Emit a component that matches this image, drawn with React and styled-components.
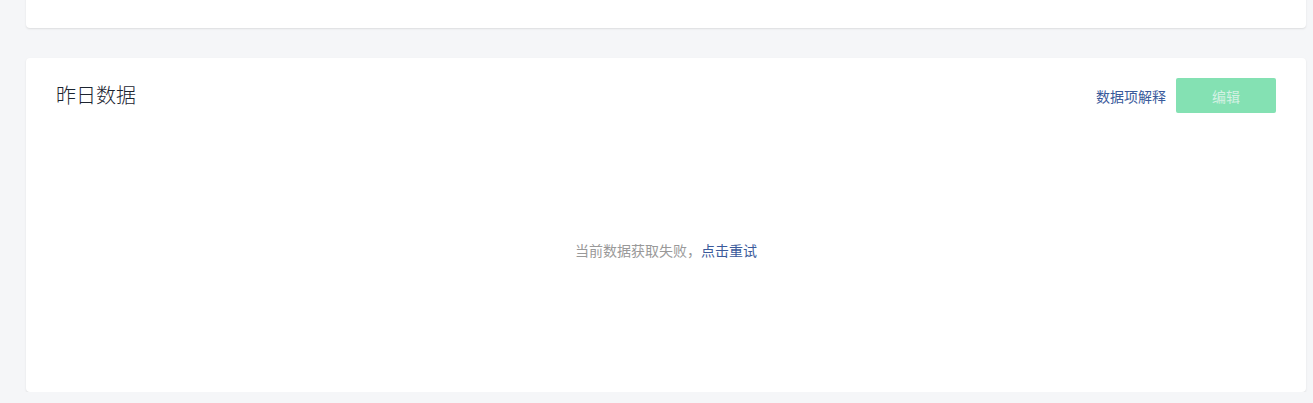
import React from "react";
import styled, { createGlobalStyle } from "styled-components";

const Global = createGlobalStyle`
  html, body { margin: 0; padding: 0; background: #f5f6f8; }
  body { font-family: "Noto Sans CJK SC", "Noto Sans", sans-serif; overflow: hidden; }
`;

const Page = styled.div`
  padding: 0 7px 0 26px;
  display: flex;
  flex-direction: column;
  gap: 30px;
`;

const Card = styled.div`
  background: #fff;
  border-radius: 4px;
  box-shadow: 0 1px 2px rgba(0, 0, 0, 0.1);
  height: ${(p) => p.$h}px;
  margin-top: ${(p) => p.$mt || 0}px;
  display: flex;
  flex-direction: column;
`;

const Header = styled.div`
  display: flex;
  align-items: center;
  justify-content: space-between;
  padding: 20px 30px;
`;

const Title = styled.h3`
  margin: 0 0 2px;
  font-size: 20px;
  font-weight: 300;
  color: #1c2430;
  line-height: 28px;
`;

const Actions = styled.div`
  display: flex;
  align-items: center;
  gap: 10px;
`;

const Link = styled.a`
  font-size: 14px;
  color: #3a5a9b;
  cursor: pointer;
  text-decoration: none;
`;

const Button = styled.button`
  width: 100px;
  height: 35px;
  border: none;
  border-radius: 2px;
  background: #84e1b3;
  color: #d4f1e4;
  font-family: inherit;
  font-size: 14px;
  cursor: not-allowed;
`;

const Body = styled.div`
  flex: 1;
  padding-top: 107px;
  text-align: center;
  font-size: 14px;
  line-height: 20px;
  color: #999;
`;

const Retry = styled.a`
  color: #3a5a9b;
  cursor: pointer;
`;

export default function App() {
  return (
    <>
      <Global />
      <Page>
        <Card $h={60} $mt={-32} />
        <Card $h={334}>
          <Header>
            <Title>昨日数据</Title>
            <Actions>
              <Link>数据项解释</Link>
              <Button disabled>编辑</Button>
            </Actions>
          </Header>
          <Body>
            当前数据获取失败，<Retry>点击重试</Retry>
          </Body>
        </Card>
      </Page>
    </>
  );
}
